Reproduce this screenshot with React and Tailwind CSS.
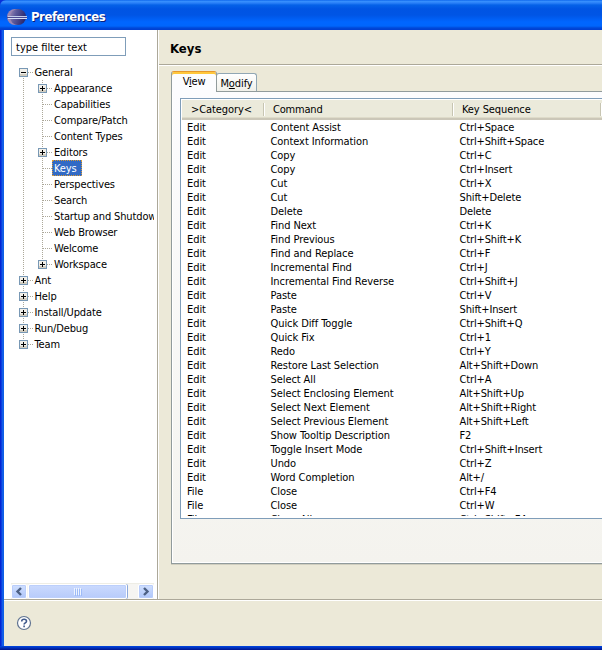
import React from "react";

const font = "font-['DejaVu_Sans_Condensed','DejaVu_Sans',sans-serif] [font-stretch:condensed]";

const tree = [
  ["General", 0, "-"],
  ["Appearance", 1, "+"],
  ["Capabilities", 1],
  ["Compare/Patch", 1],
  ["Content Types", 1],
  ["Editors", 1, "+"],
  ["Keys", 1],
  ["Perspectives", 1],
  ["Search", 1],
  ["Startup and Shutdown", 1],
  ["Web Browser", 1],
  ["Welcome", 1],
  ["Workspace", 1, "+"],
  ["Ant", 0, "+"],
  ["Help", 0, "+"],
  ["Install/Update", 0, "+"],
  ["Run/Debug", 0, "+"],
  ["Team", 0, "+"],
];

const bindings = [
  ["Edit", "Content Assist", "Ctrl+Space"],
  ["Edit", "Context Information", "Ctrl+Shift+Space"],
  ["Edit", "Copy", "Ctrl+C"],
  ["Edit", "Copy", "Ctrl+Insert"],
  ["Edit", "Cut", "Ctrl+X"],
  ["Edit", "Cut", "Shift+Delete"],
  ["Edit", "Delete", "Delete"],
  ["Edit", "Find Next", "Ctrl+K"],
  ["Edit", "Find Previous", "Ctrl+Shift+K"],
  ["Edit", "Find and Replace", "Ctrl+F"],
  ["Edit", "Incremental Find", "Ctrl+J"],
  ["Edit", "Incremental Find Reverse", "Ctrl+Shift+J"],
  ["Edit", "Paste", "Ctrl+V"],
  ["Edit", "Paste", "Shift+Insert"],
  ["Edit", "Quick Diff Toggle", "Ctrl+Shift+Q"],
  ["Edit", "Quick Fix", "Ctrl+1"],
  ["Edit", "Redo", "Ctrl+Y"],
  ["Edit", "Restore Last Selection", "Alt+Shift+Down"],
  ["Edit", "Select All", "Ctrl+A"],
  ["Edit", "Select Enclosing Element", "Alt+Shift+Up"],
  ["Edit", "Select Next Element", "Alt+Shift+Right"],
  ["Edit", "Select Previous Element", "Alt+Shift+Left"],
  ["Edit", "Show Tooltip Description", "F2"],
  ["Edit", "Toggle Insert Mode", "Ctrl+Shift+Insert"],
  ["Edit", "Undo", "Ctrl+Z"],
  ["Edit", "Word Completion", "Alt+/"],
  ["File", "Close", "Ctrl+F4"],
  ["File", "Close", "Ctrl+W"],
  ["File", "Close All", "Ctrl+Shift+F4"],
];

// Dotted connectors and the expander box of one tree row
function Guides({ level, mark, first, last, lastRoot }) {
  const x = level ? 31.5 : 12.5;
  const end = level ? 42 : 23;
  return (
    <svg width={level ? 42 : 23} height="16" className="shrink-0" shapeRendering="crispEdges">
      <g stroke="#aca899" strokeDasharray="1 1" fill="none">
        <path d={`M12.5 ${first ? 8 : 0}V${lastRoot ? 8 : 16}`} />
        {level === 1 && <path d={`M31.5 0V${last ? 8 : 16}`} />}
        <path d={`M${x + 0.5} 8.5H${end - 1}`} />
      </g>
      {mark && (
        <g>
          <rect x={x - 4} y="4.5" width="8" height="8" fill="#f1efe9" stroke="#7898b5" />
          <rect x={x - 3.5} y="10" width="7" height="2" fill="#d2cdc0" />
          <path d={`M${x - 2.5} 8.5h5`} stroke="#000" />
          {mark === "+" && <path d={`M${x} 6v5`} stroke="#000" />}
        </g>
      )}
    </svg>
  );
}

function Tree() {
  return (
    <div className="mt-2 h-[519px] w-[143px] overflow-hidden tracking-[-0.13px]">
      {tree.map(([label, level, mark], i) => (
        <div key={label} className="flex h-4 items-center whitespace-nowrap">
          <Guides level={level} mark={mark} first={i === 0} last={i === 12} lastRoot={i === 17} />
          {label === "Keys" ? (
            <span className="-ml-px h-4 w-[30px] border border-dotted border-[#d89a38] bg-[#316ac5] pl-px leading-4 text-white">
              {label}
            </span>
          ) : (
            <span className={level ? "pl-px pt-0.5 leading-4" : "pl-[0.5px] pt-0.5 leading-4"}>{label}</span>
          )}
        </div>
      ))}
    </div>
  );
}

function Arrow({ right }) {
  return (
    <div className="flex h-[15px] w-4 shrink-0 items-center justify-center rounded-[2px] border border-white bg-gradient-to-b from-[#d1e0fe] to-[#afc6fa] shadow-[inset_0_0_0_1px_#b9cdfb]">
      <svg width="8" height="9" viewBox="0 0 8 9" fill="none" stroke="#4d6185" strokeWidth="2.4">
        <path d={right ? "M2 1 5.5 4.5 2 8" : "M6 1 2.5 4.5 6 8"} />
      </svg>
    </div>
  );
}

function ScrollBar() {
  return (
    <div className="flex h-4 w-[143px] items-center border-t border-[#eeede5] bg-[#f6f5f2]">
      <Arrow />
      <div className="ml-px flex h-[15px] w-[99px] items-center justify-center gap-px rounded-[2px] border border-white bg-gradient-to-b from-[#cbdafe] to-[#b7cbfa] shadow-[inset_0_0_0_1px_#bccffb,1px_0_0_#8da9dc]">
        {[0, 1, 2, 3].map((n) => (
          <i key={n} className="h-[7px] w-px border-0 bg-[#eef4fe] shadow-[1px_1px_0_#9dbbf8]" />
        ))}
      </div>
      <div className="flex-1" />
      <Arrow right />
    </div>
  );
}

function Logo() {
  return (
    <svg width="21" height="18" viewBox="0 0 21 18">
      <defs>
        <linearGradient id="orb" x1="0" y1="0" x2="1" y2="0.3">
          <stop offset="0" stopColor="#9d8ab4" />
          <stop offset=".4" stopColor="#5c5a9c" />
          <stop offset="1" stopColor="#2b2a70" />
        </linearGradient>
      </defs>
      <circle cx="9" cy="9" r="8" fill="#9a86b4" />
      <circle cx="12" cy="9" r="8" fill="url(#orb)" />
      <g shapeRendering="crispEdges">
        <path d="M2 8.5H21" stroke="#c3cdec" />
        <path d="M1 9.5H21" stroke="#4b4a92" />
        <path d="M2 10.5H21" stroke="#d3dcf4" />
      </g>
    </svg>
  );
}

function Divider() {
  return <div className="h-[13px] w-[2px] shrink-0 border-l border-r border-l-[#c7c5b2] border-r-white" />;
}

function KeyTable() {
  return (
    <div className="ml-2 mt-[6px] h-[421px] overflow-hidden border border-r-0 border-[#7f9db9] bg-white p-px pr-0 pb-[2px]">
      <div className="flex h-5 items-center border-b-2 border-[#cbc7b8] bg-[#ebeadb] shadow-[inset_0_-1px_0_#dedbc9]">
        <div className="w-[81px] pl-[9px] pt-[3px] tracking-[-0.08px]">&gt;Category&lt;</div>
        <Divider />
        <div className="w-[187px] pl-2 pt-[3px] tracking-[-0.2px]">Command</div>
        <Divider />
        <div className="w-[146px] pl-2 pt-[3px] tracking-[-0.1px]">Key Sequence</div>
        <Divider />
      </div>
      <div className="h-[396px] overflow-hidden pt-px tracking-[-0.08px]">
        {bindings.map(([category, command, keys], i) => (
          <div key={i} className="flex h-[14px] whitespace-nowrap pl-[5px] leading-[14px]">
            <div className="w-[83.5px]">{category}</div>
            <div className="w-[189px]">{command}</div>
            <div className="tracking-[-0.14px]">{keys}</div>
          </div>
        ))}
      </div>
    </div>
  );
}

export default function App() {
  return (
    <div className={`flex h-[650px] w-[602px] flex-col overflow-hidden bg-[#0831d9] text-[11px] text-black ${font}`}>
      <header className="flex h-[30px] shrink-0 items-center rounded-tl-[6px] bg-[linear-gradient(#0058e6_0px,#3a93ff_1px,#2a80f8_3px,#0562e8_5px,#0054e3_9px,#0055e5_15px,#0066ff_22px,#0066fc_26px,#0048d8_28px,#003dd0_30px)] pl-[6px] pt-[3px]">
        <Logo />
        <h1 className="ml-1 pt-px text-[13px] font-bold leading-4 tracking-[-0.45px] text-white [text-shadow:1px_1px_0_#0a1f7c]">
          Preferences
        </h1>
      </header>
      <div className="flex h-[616px] bg-[linear-gradient(90deg,#0019cf_0px,#0831d9_1px,#166aee_3px,#0855dd_4px)] pl-1">
        <div className="flex min-w-0 flex-1 flex-col bg-[#ece9d8]">
          <div className="flex h-[569px]">
            <aside className="flex w-[153px] flex-col bg-white pl-[7px] pt-[7px]">
              <div className="h-[19px] w-[115px] border border-[#7f9db9] pl-1 leading-[19px]">type filter text</div>
              <Tree />
              <ScrollBar />
            </aside>
            <div className="w-[2px] border-l border-r border-l-[#aca899] border-r-white" />
            <main className="min-w-0 flex-1">
              <div className="flex h-9 items-center border-b border-white pl-[11px] shadow-[inset_0_-1px_0_#aca899]">
                <h2 className="pt-[3px] text-[13px] font-bold">Keys</h2>
              </div>
              <div className="pl-3 pt-[5px]">
                <div className="flex h-5 items-end">
                  <div className="z-10 -mb-px flex h-[21px] w-[46px] justify-center rounded-t-[3px] border border-b-0 border-t-[#e5972d] border-x-[#919b9c] bg-[#fcfcfe] pt-[2px] leading-4 tracking-[-0.2px] shadow-[inset_0_2px_0_#ffc73c]">
                    <span>V<u>i</u>ew</span>
                  </div>
                  <div className="-ml-px flex h-[18px] w-[41px] justify-center rounded-t-[3px] border border-b-0 border-[#91a7b4] bg-gradient-to-b from-white to-[#f0f0ea] pt-[2px] leading-4 tracking-[-0.1px]">
                    <span>M<u>o</u>dify</span>
                  </div>
                </div>
                <div className="h-[473px] border border-r-0 border-[#919b9c] bg-gradient-to-b from-[#fcfcfe] to-[#f4f3ee] shadow-[0_1px_0_#d0cebf,inset_1px_-1px_0_white]">
                  <KeyTable />
                </div>
              </div>
            </main>
          </div>
          <footer className="flex flex-1 items-center border-t border-[#aca899] pl-3 shadow-[inset_0_1px_0_white]">
            <svg width="16" height="16" viewBox="0 0 16 16">
              <circle cx="8" cy="8" r="6.5" fill="white" stroke="#617491" strokeWidth="1.2" />
              <path
                d="M5.7 6.4c0-3 4.8-2.8 4.8-.2 0 1.6-2.4 1.6-2.4 3.2M8.1 10.6v1.6"
                fill="none"
                stroke="#405a8c"
                strokeWidth="1.6"
              />
            </svg>
          </footer>
        </div>
      </div>
      <div className="h-1 bg-gradient-to-b from-[#0048e5] to-[#00138c]" />
    </div>
  );
}
